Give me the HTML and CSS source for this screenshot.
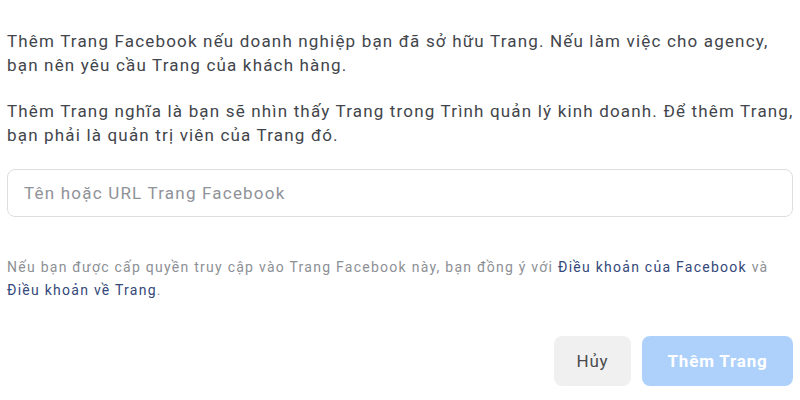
FILE: index.html
```html
<!DOCTYPE html>
<html lang="vi">
<head>
<meta charset="utf-8">
<link rel="stylesheet" href="styles.css">
</head>
<body>
<div class="dialog">
  <p class="para">Thêm Trang Facebook nếu doanh nghiệp bạn đã sở hữu Trang. Nếu làm việc cho agency,<br>bạn nên yêu cầu Trang của khách hàng.</p>
  <p class="para">Thêm Trang nghĩa là bạn sẽ nhìn thấy Trang trong Trình quản lý kinh doanh. Để thêm Trang,<br>bạn phải là quản trị viên của Trang đó.</p>
  <div class="field"><span class="placeholder">Tên hoặc URL Trang Facebook</span></div>
  <p class="note">Nếu bạn được cấp quyền truy cập vào Trang Facebook này, bạn đồng ý với <a class="link">Điều khoản của Facebook</a> và<br><a class="link">Điều khoản về Trang</a>.</p>
  <div class="actions">
    <button class="btn btn-cancel">Hủy</button>
    <button class="btn btn-primary">Thêm Trang</button>
  </div>
</div>
</body>
</html>
```
FILE: styles.css
```css
html, body { margin: 0; padding: 0; background: #fff; }
body { font-family: Roboto, "Noto Sans", sans-serif; color: #42454b; }
.dialog { width: 786px; padding: 29px 0 0 7px; }
.para { margin: 0 0 22px; font-size: 17px; line-height: 24px; letter-spacing: 1.17px; white-space: nowrap; }
.field { height: 48px; box-sizing: border-box; border: 1px solid #dcdee1; border-radius: 8px; display: flex; align-items: center; padding-left: 16px; margin-top: 20px; }
.placeholder { font-size: 17px; letter-spacing: 1.2px; color: #8f9298; }
.note { margin: 39px 0 0; font-size: 14px; line-height: 23px; letter-spacing: 1.26px; color: #8d9095; white-space: nowrap; }
.link { color: #34487a; text-decoration: none; }
.actions { display: flex; justify-content: flex-end; gap: 11px; margin-top: 34px; }
.btn { font-family: Roboto, sans-serif; font-size: 17px; letter-spacing: 0.8px; border: none; border-radius: 8px; height: 50px; padding: 0; }
.btn-cancel { width: 77px; background: #f0f0f0; color: #4a4b4e; }
.btn-primary { width: 151px; background: #aed1fb; color: #fff; font-weight: bold; }
```
